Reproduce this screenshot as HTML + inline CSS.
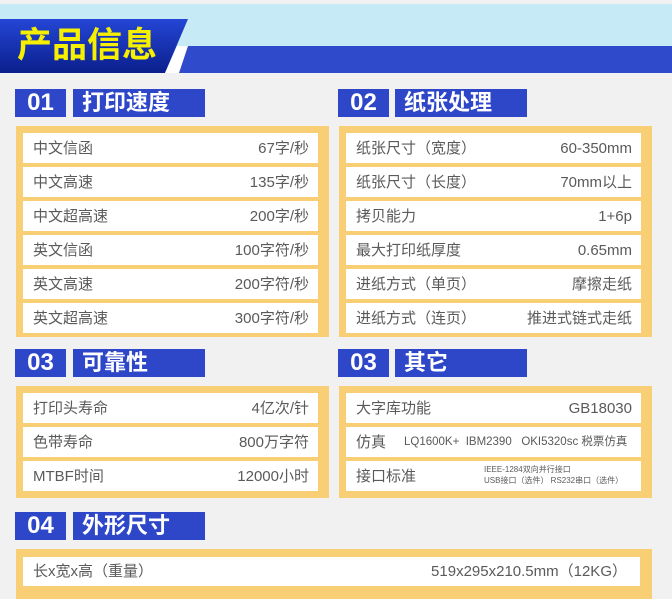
<!DOCTYPE html>
<html><head><meta charset="utf-8"><style>
*{margin:0;padding:0;box-sizing:border-box}
body{width:672px;height:589px;overflow:hidden;background:#f1f1f1;position:relative;font-family:"Liberation Sans","Noto Sans CJK SC",sans-serif;color:#5a5a5a}
.a{position:absolute}
.num{background:#2e47c9;color:#fff;font-weight:bold;font-size:24px;height:28px;line-height:28px;text-align:center;width:51px}
.tt{background:#2e47c9;color:#fff;font-weight:bold;font-size:22px;height:28px;line-height:28px;padding-left:9px;width:132px}
.pn{background:#f8cf74}
.row{position:absolute;background:#fff;height:30px;line-height:31px;font-size:15px;padding:0 9px 0 10px;white-space:nowrap}
.row b{font-weight:normal;float:right}
</style></head><body>
<div class="a" style="left:0;top:4px;width:672px;height:69px;background:#c6ebf6"></div>
<svg class="a" style="left:0;top:0" width="672" height="80">
<defs><linearGradient id="g" x1="0" y1="0" x2="0" y2="1"><stop offset="0" stop-color="#2446d6"/><stop offset="1" stop-color="#0b1f8c"/></linearGradient></defs>
<polygon points="0,19 188,19 165,73 0,73" fill="url(#g)"/>
<polygon points="170,73 188,46 672,46 672,73" fill="#2f4bcc"/>
<polygon points="165,73 177,46 188,46 179,73" fill="#fff"/>
</svg>
<div class="a" style="left:17px;top:24px;font-size:35px;font-weight:bold;color:#f6f000;line-height:44px">产品信息</div>

<div class="a num" style="left:15px;top:89px">01</div><div class="a tt" style="left:73px;top:89px">打印速度</div>
<div class="a num" style="left:338px;top:89px">02</div><div class="a tt" style="left:395px;top:89px">纸张处理</div>
<div class="a num" style="left:15px;top:349px">03</div><div class="a tt" style="left:73px;top:349px">可靠性</div>
<div class="a num" style="left:338px;top:349px">03</div><div class="a tt" style="left:395px;top:349px">其它</div>
<div class="a num" style="left:15px;top:512px">04</div><div class="a tt" style="left:73px;top:512px">外形尺寸</div>

<div class="a pn" style="left:16px;top:126px;width:313px;height:211px"></div>
<div class="row" style="left:23px;top:133px;width:295px">中文信函<b>67字/秒</b></div>
<div class="row" style="left:23px;top:167px;width:295px">中文高速<b>135字/秒</b></div>
<div class="row" style="left:23px;top:201px;width:295px">中文超高速<b>200字/秒</b></div>
<div class="row" style="left:23px;top:235px;width:295px">英文信函<b>100字符/秒</b></div>
<div class="row" style="left:23px;top:269px;width:295px">英文高速<b>200字符/秒</b></div>
<div class="row" style="left:23px;top:303px;width:295px">英文超高速<b>300字符/秒</b></div>

<div class="a pn" style="left:339px;top:126px;width:313px;height:211px"></div>
<div class="row" style="left:346px;top:133px;width:295px">纸张尺寸（宽度）<b>60-350mm</b></div>
<div class="row" style="left:346px;top:167px;width:295px">纸张尺寸（长度）<b>70mm以上</b></div>
<div class="row" style="left:346px;top:201px;width:295px">拷贝能力<b>1+6p</b></div>
<div class="row" style="left:346px;top:235px;width:295px">最大打印纸厚度<b>0.65mm</b></div>
<div class="row" style="left:346px;top:269px;width:295px">进纸方式（单页）<b>摩擦走纸</b></div>
<div class="row" style="left:346px;top:303px;width:295px">进纸方式（连页）<b>推进式链式走纸</b></div>

<div class="a pn" style="left:16px;top:386px;width:313px;height:112px"></div>
<div class="row" style="left:23px;top:393px;width:295px">打印头寿命<b>4亿次/针</b></div>
<div class="row" style="left:23px;top:427px;width:295px">色带寿命<b>800万字符</b></div>
<div class="row" style="left:23px;top:461px;width:295px">MTBF时间<b>12000小时</b></div>

<div class="a pn" style="left:339px;top:386px;width:313px;height:112px"></div>
<div class="row" style="left:346px;top:393px;width:295px">大字库功能<b>GB18030</b></div>
<div class="row" style="left:346px;top:427px;width:295px;padding-right:3px">仿真<span class="a" style="left:58px;top:0;font-size:11.5px">LQ1600K+&nbsp;&nbsp;IBM2390&nbsp;&nbsp;&nbsp;OKI5320sc 税票仿真</span></div>
<div class="row" style="left:346px;top:461px;width:295px">接口标准<span class="a" style="left:138px;top:3px;font-size:8px;line-height:11px">IEEE-1284双向并行接口<br>USB接口（选件） RS232串口（选件）</span></div>

<div class="a pn" style="left:16px;top:549px;width:636px;height:50px"></div>
<div class="row" style="left:23px;top:557px;width:617px;height:29px;line-height:30px">长x宽x高（重量）<b style="margin-right:4px">519x295x210.5mm（12KG）</b></div>
</body></html>
